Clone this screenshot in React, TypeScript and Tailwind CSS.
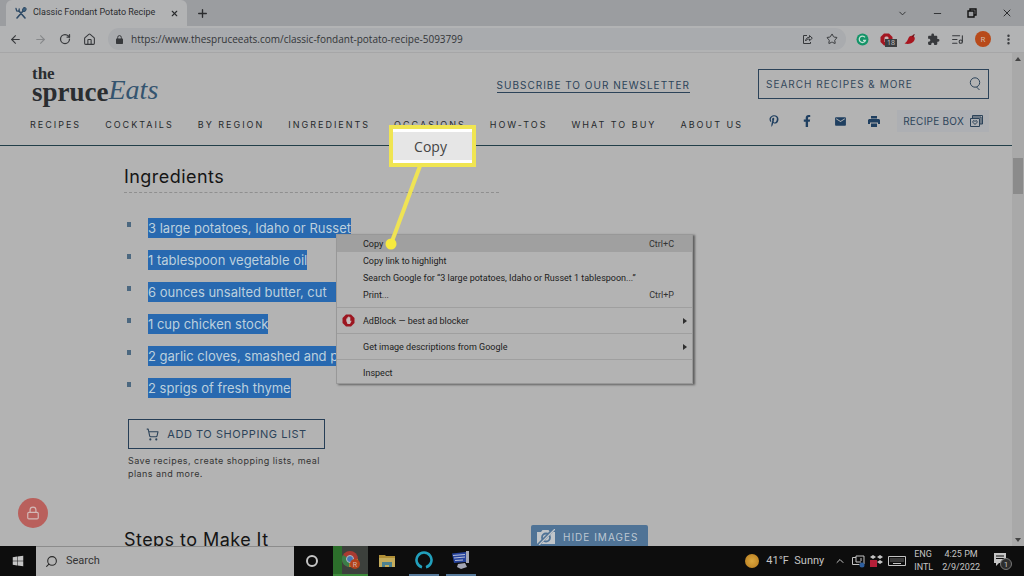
import { ReactNode } from 'react'
import {
  ArrowLeft, ArrowRight, ChevronDown, ChevronUp, Home, ListMusic, Lock, Minus,
  MoreVertical, Plus, RotateCw, Search, ShoppingCart, Star, X,
} from 'lucide-react'
import { FaFacebookF, FaPinterestP, FaWindows } from 'react-icons/fa'
import { MdEmail, MdExtension } from 'react-icons/md'

const UI_FONT = "font-['Open_Sans','Noto_Sans',sans-serif]"
const COMPACT_FONT = "font-['Roboto','Noto_Sans',sans-serif]"
const SITE_FONT = "font-['Inter','Liberation_Sans',sans-serif]"

const navItems = ['Recipes', 'Cocktails', 'By Region', 'Ingredients', 'Occasions', 'How-Tos', 'What to Buy', 'About Us']

const ingredients = [
  '3 large potatoes, Idaho or Russet',
  '1 tablespoon vegetable oil',
  '6 ounces unsalted butter, cut   ',
  '1 cup chicken stock',
  '2 garlic cloves, smashed and p',
  '2 sprigs of fresh thyme',
]

function TabStrip() {
  return (
    <div className="flex h-[26px] shrink-0 items-center bg-[#9b9da0] text-[#2b2c2e]">
      <div className="ml-[6px] flex h-full w-[181px] items-center rounded-t-md bg-[#b2b3b4] pl-[9px] pr-2">
        <svg className="mr-[6px] h-3 w-3 shrink-0" viewBox="0 0 12 12" fill="none" stroke="#2f4b66" strokeLinecap="round">
          <path d="M2 11 8 4M10 11 4 4" strokeWidth="1.6" />
          <path d="M1 1.5 1.7 4 4 4.2 4.2 2" strokeWidth="1.3" />
          <ellipse cx="9.3" cy="2.6" rx="1.6" ry="2" transform="rotate(35 9.3 2.6)" fill="#3d6380" />
        </svg>
        <span className={`flex-1 truncate text-[9px] ${COMPACT_FONT}`}>Classic Fondant Potato Recipe</span>
        <button aria-label="Close tab"><X size={9} strokeWidth={3} /></button>
      </div>
      <button aria-label="New tab" className="ml-[9px]"><Plus size={13} strokeWidth={2.5} /></button>
      <div className="ml-auto flex items-center gap-6 pr-[11px]">
        <button aria-label="Search tabs"><ChevronDown size={11} /></button>
        <button aria-label="Minimize"><Minus size={11} /></button>
        <button aria-label="Restore">
          <svg width="10" height="10" viewBox="0 0 10 10" fill="none" stroke="#111" strokeWidth="1.4">
            <path d="M1 3h6v6H1zM3 3V1h6v6H7" />
          </svg>
        </button>
        <button aria-label="Close window"><X size={12} strokeWidth={2} /></button>
      </div>
    </div>
  )
}

function Toolbar() {
  return (
    <div className="flex h-[27px] shrink-0 items-center border-b border-[#a6a6a7] bg-[#b2b3b4] px-[9px] text-[#37393c]">
      <div className="flex items-center gap-3">
        <button aria-label="Back"><ArrowLeft size={13} /></button>
        <button aria-label="Forward" className="text-[#86888a]"><ArrowRight size={13} /></button>
        <button aria-label="Reload"><RotateCw size={12} strokeWidth={2.5} /></button>
        <button aria-label="Home"><Home size={13} /></button>
      </div>
      <div className="ml-3 flex h-[22px] flex-1 items-center rounded-full bg-[#a9abae] px-2">
        <svg width="7" height="9" viewBox="0 0 7 9" fill="#37393c">
          <rect y="3.5" width="7" height="5.5" rx=".7" />
          <path d="M1.7 4V2.4a1.8 1.8 0 0 1 3.6 0V4" fill="none" stroke="#37393c" />
        </svg>
        <input
          aria-label="Address"
          className="ml-2 min-w-0 flex-1 bg-transparent text-[10px] text-[#333538] outline-none"
          defaultValue="https://www.thespruceeats.com/classic-fondant-potato-recipe-5093799"
        />
        <button aria-label="Share" className="mr-[13px]">
          <svg width="11" height="11" viewBox="0 0 11 11" fill="none" stroke="currentColor">
            <path d="M5 1.5H1.5v8h7V8" />
            <path d="M3.5 7c.3-2.6 2-3.7 4-3.7V1.5l2.8 2.7-2.8 2.5V5C5.8 5 4.5 5.5 3.500 7Z" />
          </svg>
        </button>
        <button aria-label="Bookmark"><Star size={12} /></button>
      </div>
      <div className="ml-[10px] flex items-center gap-[11px]">
        <svg width="13" height="13" viewBox="0 0 13 13" aria-label="Grammarly">
          <circle cx="6.5" cy="6.5" r="6" fill="#149468" />
          <path d="M9 4.3A3.2 3.2 0 1 0 9.5 7.3H7" fill="none" stroke="#c4e0d5" strokeWidth="1.3" />
        </svg>
        <span className="relative">
          <svg width="13" height="13" viewBox="0 0 13 13">
            <path d="M4 .5h5L12.5 4v5L9 12.5H4L.5 9V4z" fill="#a31621" />
            <path d="M4.5 9V4.500C5 3 8 3 8.500 4.500V9z" fill="#c9b3b3" />
          </svg>
          <span className="absolute left-[5px] top-[6px] bg-[#3c3e40] px-[2px] text-[7px] leading-[8px] text-[#c4c4c4]">18</span>
        </span>
        <svg width="12" height="12" viewBox="0 0 12 12">
          <path d="M.5 10.500C3 9 3.500 7 4.500 5c1-2.500 4.500-3 6-.8C12 8 7 12.500 .5 10.500Z" fill="#a8161f" />
          <path d="M8.500 4c.3-1.500 1-2 2-2.500" stroke="#6e1217" strokeWidth="1.3" />
        </svg>
        <button aria-label="Extensions"><MdExtension size={13} /></button>
        <button aria-label="Media"><ListMusic size={13} /></button>
        <button className="h-4 w-4 rounded-full bg-[#b84a1a] text-[8px] leading-4 text-[#d5c0b4]">R</button>
        <button aria-label="Menu"><MoreVertical size={13} strokeWidth={2.5} /></button>
      </div>
    </div>
  )
}

function SiteHeader() {
  return (
    <header className="border-b border-[#223f49] pb-2 pl-[30px] pr-[23px] pt-[11px]">
      <div className="flex h-10 items-center text-[#2c4359]">
        <a href="#" className="flex items-end pl-[2px] text-[#2a2d30]">
          <span className="font-['Liberation_Serif',serif] font-bold">
            <span className="block text-[17px] leading-[16px]">the</span>
            <span className="block text-[27px] leading-[20px]">spruce</span>
          </span>
          <span className="font-['Liberation_Serif',serif] text-[28px] italic leading-[24px] text-[#34546f]">Eats</span>
        </a>
        <a href="#" className="ml-auto mr-[68px] mt-1 border-b border-[#2c4359] text-[10px] leading-[13px] tracking-widest">
          SUBSCRIBE TO OUR NEWSLETTER
        </a>
        <div className="flex h-[30px] w-[231px] items-center border border-[#2c4359] px-[7px]">
          <input
            aria-label="Search recipes"
            placeholder="SEARCH RECIPES & MORE"
            className="min-w-0 flex-1 bg-transparent text-[10px] tracking-widest outline-none placeholder:text-[#34485b]"
          />
          <button aria-label="Search">
            <svg width="12" height="14" viewBox="0 0 12 14" fill="none" stroke="currentColor">
              <circle cx="6" cy="5.5" r="4.7" />
              <path d="M7.5 10 10.5 13" />
            </svg>
          </button>
        </div>
      </div>
      <div className="mt-[9px] flex h-6 items-center justify-between">
        <nav className="flex gap-6 text-[9px] tracking-[2px] text-[#26292c]">
          {navItems.map((item) => (
            <a key={item} href="#" className="whitespace-nowrap uppercase">{item}</a>
          ))}
        </nav>
        <div className="flex items-center gap-[21px] pb-2 text-[#1f3f60]">
          <a href="#" aria-label="Pinterest"><FaPinterestP size={12} /></a>
          <a href="#" aria-label="Facebook"><FaFacebookF size={12} /></a>
          <a href="#" aria-label="Email"><MdEmail size={13} /></a>
          <a href="#" aria-label="Print">
            <svg width="12" height="11" viewBox="0 0 12 11" fill="currentColor">
              <path d="M3 0h6v2.500H3zM1 3h10l1 1v4h-2V6.500H2V8H0V4zM3 7.500h6V11H3z" />
            </svg>
          </a>
          <a href="#" className="-ml-1 flex h-[22px] items-center gap-[6px] bg-[#adafb3] px-[6px] text-[10px] tracking-wide text-[#2c4359]">
            RECIPE BOX
            <svg width="13" height="12" viewBox="0 0 13 12" fill="none" stroke="currentColor">
              <path d="M.5 3.5h9v8h-9zM2.5 3V.5h10V9H10M2 2h9v7" />
              <path d="M5 9.5 2.8 7.2C2.500 5.500 4.500 5 5 6.500 5.500 5 7.500 5.500 7.200 7.200z" />
            </svg>
          </a>
        </div>
      </div>
    </header>
  )
}

function Recipe() {
  return (
    <main className="pl-[124px] pt-[19px]">
      <h2 className="w-[375px] border-b border-dashed border-[#8f8f8f] pb-[3px] text-[18px] leading-[24px] tracking-wide text-[#151515]">
        Ingredients
      </h2>
      <ul className="mt-[25px] flex flex-col gap-3">
        {ingredients.map((item) => (
          <li key={item} className="flex h-5 pl-[3px]">
            <span className="mr-[17px] mt-1 h-[5px] w-1 bg-[#4c6880]" />
            <span className="whitespace-pre bg-[#2869b0] text-[13px] leading-5 text-[#bcd0de]">{item}</span>
          </li>
        ))}
      </ul>
      <div className="ml-[4px] mt-[21px] w-[197px]">
        <button className="flex h-[30px] w-full items-center justify-center gap-2 border border-[#263e56] text-[11px] tracking-wider text-[#2c4359]">
          <ShoppingCart size={13} />
          ADD TO SHOPPING LIST
        </button>
        <p className="mt-[5px] text-[9px] leading-[13px] tracking-wider text-[#333]">
          Save recipes, create shopping lists, meal plans and more.
        </p>
      </div>
      <div className="mt-[45px] flex items-start">
        <h2 className="w-[407px] pt-[3px] text-[18px] leading-[24px] tracking-wide text-[#151515]">Steps to Make It</h2>
        <button className="flex h-6 items-center gap-2 rounded-t-xs bg-[#4f7396] pl-[6px] pr-[10px] text-[10px] tracking-widest text-[#bdc8d2]">
          <svg width="18" height="16" viewBox="0 0 18 16">
            <path d="M0 3h4l1.500-2h6L13 3h5v12H0z" fill="#c0c5c9" />
            <circle cx="9" cy="8.5" r="4" fill="none" stroke="#4f7396" strokeWidth="1.8" />
            <path d="M1 16 17 0" stroke="#4f7396" strokeWidth="3" />
            <path d="M2 16 18 0" stroke="#c0c5c9" strokeWidth="1.3" />
          </svg>
          HIDE IMAGES
        </button>
      </div>
    </main>
  )
}

interface MenuRowProps {
  label: string
  shortcut?: string
  icon?: ReactNode
  submenu?: boolean
  active?: boolean
}

function MenuRow({ label, shortcut, icon, submenu, active }: MenuRowProps) {
  return (
    <button role="menuitem" className={`flex h-[17px] w-full items-center pr-[5px] text-left ${active ? 'bg-[#a0a0a0]' : ''}`}>
      <span className="flex w-[26px] pl-[5px]">{icon}</span>
      <span className="flex-1">{label}</span>
      {shortcut && <span className="pr-[13px] text-[#333]">{shortcut}</span>}
      {submenu && <span className="border-y-[3px] border-l-4 border-y-transparent border-l-[#2f2f2f]" />}
    </button>
  )
}

function ContextMenu() {
  const separator = <hr className="my-1 border-[#9f9f9f]" />
  return (
    <div
      role="menu"
      className={`absolute left-[336px] top-[234px] w-[357px] border border-[#989898] bg-[#b3b3b3] pb-[2px] text-[9px] leading-3 text-[#1c1c1c] shadow-[2px_1px_2px_#606060] ${COMPACT_FONT}`}
    >
      <MenuRow label="Copy" shortcut="Ctrl+C" active />
      <MenuRow label="Copy link to highlight" />
      <MenuRow label="Search Google for “3 large potatoes, Idaho or Russet 1 tablespoon...”" />
      <MenuRow label="Print..." shortcut="Ctrl+P" />
      {separator}
      <MenuRow
        label="AdBlock — best ad blocker"
        submenu
        icon={
          <svg width="13" height="13" viewBox="0 0 13 13">
            <path d="M4 .5h5L12.5 4v5L9 12.5H4L.5 9V4z" fill="#9c1620" />
            <path d="M4.3 7V4.5h1V3.2h1V2.5h1v.7h1v4l.7-.7.5.5L8 10H5.500z" fill="#c9bcbc" />
          </svg>
        }
      />
      {separator}
      <MenuRow label="Get image descriptions from Google" submenu />
      {separator}
      <MenuRow label="Inspect" />
    </div>
  )
}

function Callout() {
  return (
    <>
      <svg className="absolute left-[380px] top-[160px]" width="50" height="92" viewBox="0 0 50 92">
        <path d="M40 6 11 84" stroke="#efe354" strokeWidth="4" />
        <circle cx="11" cy="84" r="5.5" fill="#f7ea3e" />
      </svg>
      <div className="absolute left-[389px] top-[125px] h-[42px] w-[87px] border-4 border-[#f0e552] bg-white py-[3px]">
        <div className="flex h-full items-center justify-center bg-[#e6e6e6] pr-1 text-[14px] text-[#444]">Copy</div>
      </div>
    </>
  )
}

function Taskbar() {
  return (
    <footer className={`flex h-[30px] shrink-0 items-center bg-[#0d0d0d] text-[#c4c4c4] ${COMPACT_FONT}`}>
      <button aria-label="Start" className="flex w-9 justify-center"><FaWindows size={12} /></button>
      <label className="flex h-full w-[258px] items-center gap-2 border-t border-[#8c8c8c] bg-[#b3b3b3] pl-[9px] text-[#2a2a2a]">
        <Search size={13} className="-scale-x-100" />
        <input aria-label="Search" placeholder="Search" className="w-40 bg-transparent text-[11px] outline-none placeholder:text-[#333]" />
      </label>
      <button aria-label="Cortana" className="flex w-[39px] justify-center pr-[3px]">
        <span className="h-3 w-3 rounded-full border-2 border-[#c4c4c4]" />
      </button>
      <button aria-label="Chrome" className="flex h-full w-[35px] items-center justify-center border-b-2 border-[#3c8a3a] bg-linear-to-r from-[#2c6e2b] from-25% to-[#3c403c] to-25%">
        <svg width="20" height="20" viewBox="0 0 20 20">
          <circle cx="9" cy="9" r="8" fill="#a93a31" />
          <path d="M9 9 2 5a8 8 0 0 0 6 12z" fill="#3a7d48" />
          <path d="M9 9h8a8 8 0 0 1-9 8z" fill="#b58e2c" />
          <circle cx="9" cy="9" r="3.5" fill="#4677b5" stroke="#bbb" />
          <circle cx="14" cy="14" r="5" fill="#b3411c" />
          <text x="14" y="16.5" fontSize="7" textAnchor="middle" fill="#d5b8aa">R</text>
        </svg>
      </button>
      <button aria-label="File Explorer" className="flex w-[38px] justify-center">
        <svg width="16" height="14" viewBox="0 0 16 14">
          <path d="M0 1h6l1 1h9v11H0z" fill="#b08f37" />
          <path d="M0 4h16v9H0z" fill="#c4ac5c" />
          <path d="M3 13V8h10v5h-3v-2H6v2z" fill="#4d8290" />
        </svg>
      </button>
      <button aria-label="Alexa" className="mx-[3px] flex h-full w-[30px] items-center justify-center border-b-2 border-[#56799a]">
        <svg width="18" height="18" viewBox="0 0 18 18" fill="none" stroke="#22a0bc" strokeWidth="2.6">
          <path d="M7 16.2a7.5 7.5 0 1 1 4 0" />
        </svg>
      </button>
      <button aria-label="Remote desktop" className="ml-1 flex h-full w-[30px] items-center justify-center border-b-2 border-[#56799a]">
        <svg width="18" height="18" viewBox="0 0 18 18">
          <path d="M14 0h3v12h-3zM6 13l7-1 2 4-6 2-4-2z" fill="#a3a6b5" />
          <path d="M0 2.5 14 1v10L2 12z" fill="#26439c" />
          <path d="m1 4.5 12-1M2 7l11-1M3 9.5l8-.5" stroke="#b5bdd8" strokeWidth="1.2" />
        </svg>
      </button>
      <div className="ml-auto flex items-center pr-3">
        <span className="mr-[7px] h-[14px] w-[14px] rounded-full bg-radial from-[#dba83f] to-[#b67a1c]" />
        <span className="mr-[10px] whitespace-pre text-[11px]">41°F  Sunny</span>
        <ChevronUp size={12} />
        <svg className="ml-[6px]" width="13" height="13" viewBox="0 0 13 13" fill="none" stroke="#c4c4c4">
          <path d="M4 2.5H.5v7h7M4 1h8v8M4 1v6h5M9 3v3" />
          <circle cx="10" cy="10" r="2.5" fill="#2e5f9e" stroke="none" />
        </svg>
        <svg className="ml-[5px]" width="13" height="12" viewBox="0 0 13 12">
          <path d="m3 0 3 2-3 2-3-2zM10 0l3 2-3 2-3-2zM10 5l3 2-3 2-3-2z" fill="#c4c4c4" />
          <rect y="5" width="7" height="7" fill="#b31f38" />
        </svg>
        <svg className="ml-[5px]" width="18" height="12" viewBox="0 0 18 12" fill="none" stroke="#c4c4c4">
          <path d="M.5 1.5h17v9H.5z" />
          <path d="M2.5 4h13M2.5 6h13" strokeDasharray="1 1" />
          <path d="M5 8.5h8" />
        </svg>
        <span className="ml-2 text-[9px] leading-[13px]">ENG<br />INTL</span>
        <span className="ml-[9px] text-center text-[9px] leading-[13px]">4:25 PM<br />2/9/2022</span>
        <button aria-label="Notifications" className="ml-[14px]">
          <svg width="18" height="18" viewBox="0 0 18 18">
            <path d="M0 1h12v10H5l-3 3v-3H0z" fill="#c4c4c4" />
            <path d="M2 4h8M2 6.5h8" stroke="#0d0d0d" />
            <circle cx="12" cy="12" r="5.5" fill="#2d2d2d" stroke="#777" />
            <text x="12" y="15" fontSize="8" textAnchor="middle" fill="#c4c4c4">1</text>
          </svg>
        </button>
      </div>
    </footer>
  )
}

export default function App() {
  return (
    <div className={`relative flex h-screen flex-col overflow-hidden bg-[#b3b3b3] ${UI_FONT}`}>
      <TabStrip />
      <Toolbar />
      <div className="flex min-h-0 flex-1">
        <div className={`min-w-0 flex-1 overflow-hidden ${SITE_FONT}`}>
          <SiteHeader />
          <Recipe />
        </div>
        <div className="flex w-3 flex-col items-center bg-[#a9a9a9] py-1">
          <span className="border-x-[3px] border-b-4 border-x-transparent border-b-[#444]" />
          <span className="mt-[97px] h-9 w-[10px] bg-[#8b8b8b]" />
          <span className="mt-auto border-x-[3px] border-t-4 border-x-transparent border-t-[#444]" />
        </div>
      </div>
      <Taskbar />
      <button aria-label="Privacy" className="absolute bottom-12 left-[18px] flex h-[30px] w-[30px] items-center justify-center rounded-full bg-[#b9605c] text-[#d3b9b7]">
        <Lock size={14} />
      </button>
      <ContextMenu />
      <Callout />
    </div>
  )
}
